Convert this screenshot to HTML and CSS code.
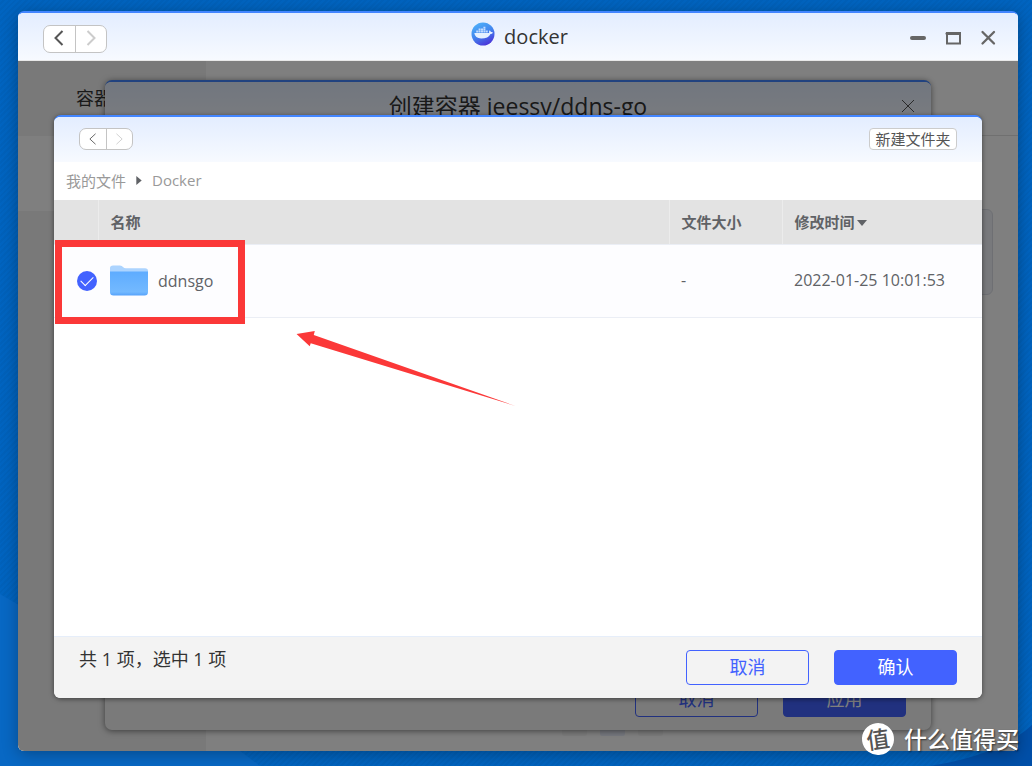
FILE: index.html
```html
<!DOCTYPE html>
<html lang="zh-CN">
<head>
<meta charset="utf-8">
<title>docker</title>
<link rel="stylesheet" href="styles.css">
</head>
<body>
<div class="desktop">
  <svg class="wallpaper" viewBox="0 0 1032 766" preserveAspectRatio="none" aria-hidden="true">
    <path d="M0 594Q150 680 260 766H0Z" fill="#0868c4"/>
    <path d="M930 766Q1000 755 1032 725V766Z" fill="#004fa8"/>
  </svg>

  <main class="window">
    <header class="titlebar">
      <div class="nav nav-large">
        <button type="button" aria-label="后退"><svg viewBox="0 0 10 16"><path d="M8.500 1L1.500 8L8.500 15"/></svg></button>
        <button type="button" aria-label="前进" disabled><svg viewBox="0 0 10 16"><path d="M1.500 1L8.500 8L1.500 15"/></svg></button>
      </div>
      <h1 class="app-title">
        <svg class="whale" viewBox="0 0 24 24" aria-hidden="true">
          <defs><linearGradient id="sea" x1="0.200" y1="0" x2="0.700" y2="1"><stop offset="0" stop-color="#4eb2fa"/><stop offset="0.500" stop-color="#4285ee"/><stop offset="1" stop-color="#4b30d8"/></linearGradient></defs>
          <circle cx="12" cy="12" r="11.500" fill="url(#sea)"/>
          <path d="M3.300 11H18.100Q17.700 9.200 18.700 8.200Q19.800 9 19.900 10.100Q21.200 9.700 22 10.400Q21.300 11.900 19.500 11.900Q17.400 16.400 10.200 16.400Q4 16.400 3.300 11Z" fill="#e6f1ff"/>
          <path d="M5.200 8.600h2v2h-2zM7.600 8.600h2v2h-2zM10 8.600h2v2h-2zM12.400 8.600h2v2h-2zM14.800 8.600h2v2h-2zM7.600 6.600h2v1.700h-2zM10 6.600h2v1.700h-2zM12.400 6.600h2v1.700h-2zM12.400 4.800h2v1.500h-2z" fill="#c2dcff"/>
        </svg>
        <span>docker</span>
      </h1>
      <div class="window-tools">
        <button type="button" aria-label="最小化"><svg viewBox="0 0 16 16"><path d="M2 8H14" stroke-width="4"/></svg></button>
        <button type="button" aria-label="最大化"><svg viewBox="0 0 16 16"><rect x="2" y="3" width="13" height="10.500" stroke-width="2"/><path d="M2 3.500H15" stroke-width="3"/></svg></button>
        <button type="button" aria-label="关闭"><svg viewBox="0 0 16 16"><path d="M2.500 2L14 13.500M14 2L2.500 13.500" stroke-width="2.300"/></svg></button>
      </div>
    </header>

    <div class="workspace">
      <nav class="sidebar">
        <a class="side-item" href="#">容器</a>
        <a class="side-item active" href="#" aria-label="镜像"></a>
      </nav>
      <section class="content">
        <div class="content-bar"></div>
        <div class="card"></div>
        <div class="pager"><span></span><span class="current"></span><span></span></div>
      </section>

      <section class="dialog create-dialog" aria-label="创建容器">
        <header class="create-head">
          <h2>创建容器 jeessy/ddns-go</h2>
          <button type="button" class="close" aria-label="关闭"><svg viewBox="0 0 14 14"><path d="M1 1L13 13M13 1L1 13"/></svg></button>
        </header>
        <footer class="create-foot">
          <button type="button" class="btn">取消</button>
          <button type="button" class="btn primary">应用</button>
        </footer>
      </section>
      <div class="shade"></div>
    </div>
  </main>

  <section class="dialog picker" role="dialog" aria-label="选择文件夹">
    <header class="picker-head">
      <div class="nav nav-small">
        <button type="button" aria-label="后退"><svg viewBox="0 0 10 16"><path d="M8.500 2L2 8L8.500 14"/></svg></button>
        <button type="button" aria-label="前进" disabled><svg viewBox="0 0 10 16"><path d="M1.500 2L8 8L1.500 14"/></svg></button>
      </div>
      <button type="button" class="new-folder">新建文件夹</button>
    </header>
    <nav class="crumbs">
      <a href="#">我的文件</a>
      <svg viewBox="0 0 6 10" aria-hidden="true"><path d="M0 0L6 5L0 10Z"/></svg>
      <a href="#">Docker</a>
    </nav>
    <div class="list">
      <table>
        <colgroup><col class="col-check"><col><col class="col-size"><col class="col-time"></colgroup>
        <thead>
          <tr><th></th><th>名称</th><th>文件大小</th><th>修改时间<svg class="sort" viewBox="0 0 10 6" aria-hidden="true"><path d="M0 0H10L5 6Z"/></svg></th></tr>
        </thead>
        <tbody>
          <tr>
            <td class="check-cell"><input type="checkbox" id="row-ddnsgo" checked></td>
            <td>
              <label class="file" for="row-ddnsgo">
                <svg class="folder" viewBox="0 0 38 31" aria-hidden="true">
                  <defs><linearGradient id="fold" x1="0" y1="0" x2="0" y2="1"><stop offset="0" stop-color="#5eacff"/><stop offset="0.850" stop-color="#73b9ff"/><stop offset="1" stop-color="#55a2fb"/></linearGradient></defs>
                  <path d="M0 8V3Q0 0.500 3 0.500H10Q12 0.500 13 2Q14 3.300 16 3.300H35Q38 3.300 38 6V9H0Z" fill="#acd4ff"/>
                  <path d="M0 6.500H38V27Q38 30.500 34.500 30.500H3.500Q0 30.500 0 27Z" fill="url(#fold)"/>
                </svg>
                <span>ddnsgo</span>
              </label>
            </td>
            <td>-</td>
            <td>2022-01-25 10:01:53</td>
          </tr>
        </tbody>
      </table>
    </div>
    <footer class="picker-foot">
      <p>共 1 项，选中 1 项</p>
      <div class="actions">
        <button type="button" class="btn">取消</button>
        <button type="button" class="btn primary">确认</button>
      </div>
    </footer>
    <div class="marker"></div>
    <svg class="arrow" viewBox="0 0 216 74" aria-hidden="true"><path d="M0 3L18 0L17 4L216 74L14 12L13 15Z"/></svg>
  </section>

  <div class="watermark"><span class="seal">值</span><span>什么值得买</span></div>
</div>
</body>
</html>
```
FILE: styles.css
```css
* { box-sizing: border-box; }

body {
  margin: 0;
  font-family: "Open Sans", "Noto Sans CJK SC", sans-serif;
  font-size: 15px;
  color: #606266;
}

h1, h2, p { margin: 0; font-weight: 400; }
a { color: inherit; text-decoration: none; }
svg { display: block; flex: none; }

button {
  margin: 0;
  padding: 0;
  border: 0;
  background: none;
  color: inherit;
  font: inherit;
}

.desktop {
  position: relative;
  height: 100vh;
  min-height: 600px;
  overflow: hidden;
  background: repeating-linear-gradient(135deg, #0064c0 0 2px, #0061ba 2px 4px);
}

.wallpaper { position: absolute; inset: 0; width: 100%; height: 100%; }

.window {
  position: absolute;
  inset: 11px 14px 15px 18px;
  display: flex;
  flex-direction: column;
  overflow: hidden;
  border-top: 2px solid #4285ff;
  border-radius: 6px;
  background: #fff;
  box-shadow: 0 3px 16px rgba(0, 0, 0, 0.3);
}

.titlebar {
  display: grid;
  grid-template-columns: 1fr auto 1fr;
  align-items: center;
  height: 48px;
  padding: 0 22px 0 25px;
  background: linear-gradient(#e3edff, #f7faff);
  border-bottom: 1px solid #e8e8e8;
}

.nav {
  display: flex;
  justify-self: start;
  border: 1px solid #c4c4c4;
  border-radius: 7px;
  background: #fff;
  color: #555;
}
.nav button { display: flex; flex: 1; align-items: center; justify-content: center; }
.nav button + button { border-left: 1px solid #c4c4c4; }
.nav button:disabled { color: #ccc; }
.nav svg { fill: none; stroke: currentColor; }
.nav-large { width: 64px; height: 28px; margin-top: 4px; }
.nav-large svg { width: 10px; height: 16px; margin-bottom: 2px; stroke-width: 2; }
.nav-small { width: 54px; height: 22px; }
.nav-small svg { width: 9px; height: 14px; stroke-width: 1; }

.app-title {
  display: flex;
  align-items: center;
  gap: 9px;
  color: #333;
  font-size: 20px;
  line-height: 28px;
}
.whale { width: 24px; height: 24px; margin-bottom: 6px; }

.window-tools { display: flex; justify-self: end; gap: 19px; margin-top: 3px; }
.window-tools svg { width: 16px; height: 16px; fill: none; stroke: #666; stroke-linecap: round; }

.workspace { position: relative; display: flex; flex: 1; min-height: 0; }

.sidebar { width: 188px; background: #f2f2f2; }
.side-item {
  display: flex;
  align-items: center;
  height: 75px;
  padding: 0 0 4px 58px;
  color: #333;
  font-size: 18px;
}
.side-item.active { background: #fff; }

.content { display: flex; flex: 1; flex-direction: column; background: #fff; }
.content-bar { height: 75px; border-bottom: 1px solid #e0e0e0; }
.card {
  height: 86px;
  margin: 73px 25px 0;
  border: 1px solid #dcdfe6;
  border-radius: 6px;
  background: #f0f2f8;
}
.pager { display: flex; justify-content: center; gap: 13px; margin-top: auto; padding-bottom: 15px; }
.pager span { width: 25px; height: 25px; border-radius: 2px; background: #f7f7f7; }
.pager .current { background: #ecf0fd; }

.dialog {
  position: absolute;
  display: flex;
  flex-direction: column;
  border-top: 2px solid #4285ff;
  border-radius: 7px;
}

.create-dialog {
  inset: 19px 87px 21px;
  background: #f4f4f4;
  box-shadow: 0 1px 6px rgba(0, 0, 0, 0.5);
}
.create-head {
  display: flex;
  align-items: center;
  justify-content: center;
  height: 48px;
  border-radius: 6px 6px 0 0;
  background: linear-gradient(#e3edff, #f7faff);
  color: #333;
}
.create-head h2 { font-size: 23px; line-height: 30px; }
.create-head .close { position: absolute; right: 16px; }
.close svg { width: 14px; height: 14px; fill: none; stroke: #555; stroke-width: 1; }
.create-foot { display: flex; justify-content: flex-end; gap: 25px; margin-top: auto; padding: 13px 25px; }

.shade { position: absolute; inset: 0; background: rgba(0, 0, 0, 0.5); }

.btn {
  width: 123px;
  height: 35px;
  border: 1px solid #4262ff;
  border-radius: 4px;
  color: #4262ff;
  font-size: 18px;
  line-height: 33px;
}
.btn.primary { background: #4262ff; color: #fff; }

.picker {
  inset: 115px 50px 68px 54px;
  background: #fff;
  box-shadow: 0 1px 5px rgba(0, 0, 0, 0.5);
}
.picker-head {
  display: flex;
  align-items: center;
  justify-content: space-between;
  height: 45px;
  padding: 0 25px 2px;
  border-radius: 6px 6px 0 0;
  background: linear-gradient(#e3edff, #f7faff);
}
.new-folder {
  width: 88px;
  height: 22px;
  border: 1px solid #ccc;
  border-radius: 4px;
  background: #fff;
  color: #555;
  line-height: 18px;
}

.crumbs {
  display: flex;
  align-items: center;
  gap: 10px;
  height: 38px;
  padding: 0 12px 2px;
  color: #999;
}
.crumbs svg { width: 6px; height: 9px; fill: #606266; }

.list { flex: 1; min-height: 0; }
table { width: 100%; border-collapse: collapse; table-layout: fixed; }
.col-check { width: 44px; }
.col-size { width: 113px; }
.col-time { width: 200px; }
th, td { padding: 0 12px; text-align: left; }
th {
  height: 44px;
  border-bottom: 1px solid #ebeef5;
  background: #e3e3e3;
  font-weight: 700;
}
th + th { border-left: 1px solid #ececec; }
td {
  height: 73px;
  padding-bottom: 2px;
  border-bottom: 1px solid #ebeef5;
  background: #fdfdff;
  font-size: 16px;
}
.sort { display: inline-block; width: 10px; height: 6px; margin-left: 2px; vertical-align: 2px; fill: #606266; }

.check-cell { padding: 0 0 0 23px; }
.check-cell input {
  display: grid;
  place-items: center;
  width: 20px;
  height: 20px;
  margin: 0;
  appearance: none;
  border-radius: 50%;
  background: #4262ff;
}
.check-cell input::after {
  content: "";
  width: 11px;
  height: 6px;
  margin-bottom: 3px;
  border: solid #fff;
  border-width: 0 0 1px 1px;
  transform: rotate(-45deg);
}
.file { display: flex; align-items: center; gap: 10px; padding-top: 2px; }
.folder { width: 38px; height: 31px; }

.picker-foot {
  display: flex;
  align-items: flex-start;
  justify-content: space-between;
  padding: 13px 25px;
  border-top: 1px solid #e6eefa;
  border-radius: 0 0 6px 6px;
  background: #f3f3f3;
}
.picker-foot p { color: #333; font-size: 18px; line-height: 18px; }
.actions { display: flex; gap: 25px; }

.marker {
  position: absolute;
  top: 123px;
  left: 1px;
  width: 190px;
  height: 84px;
  border: 7px solid #fb3838;
}
.arrow { position: absolute; top: 214px; left: 242px; width: 220px; height: 75px; fill: #fb3838; }

.watermark {
  position: absolute;
  right: 13px;
  bottom: 11px;
  display: flex;
  align-items: center;
  gap: 10px;
  color: #fff;
  font-size: 23px;
  font-weight: 500;
  line-height: 32px;
  text-shadow: 1px 1px 2px rgba(0, 0, 0, 0.6);
}
.seal {
  width: 32px;
  height: 32px;
  border-radius: 50%;
  background: #fff;
  color: #555;
  text-align: center;
  text-shadow: none;
  transform: rotate(-8deg);
}
```
